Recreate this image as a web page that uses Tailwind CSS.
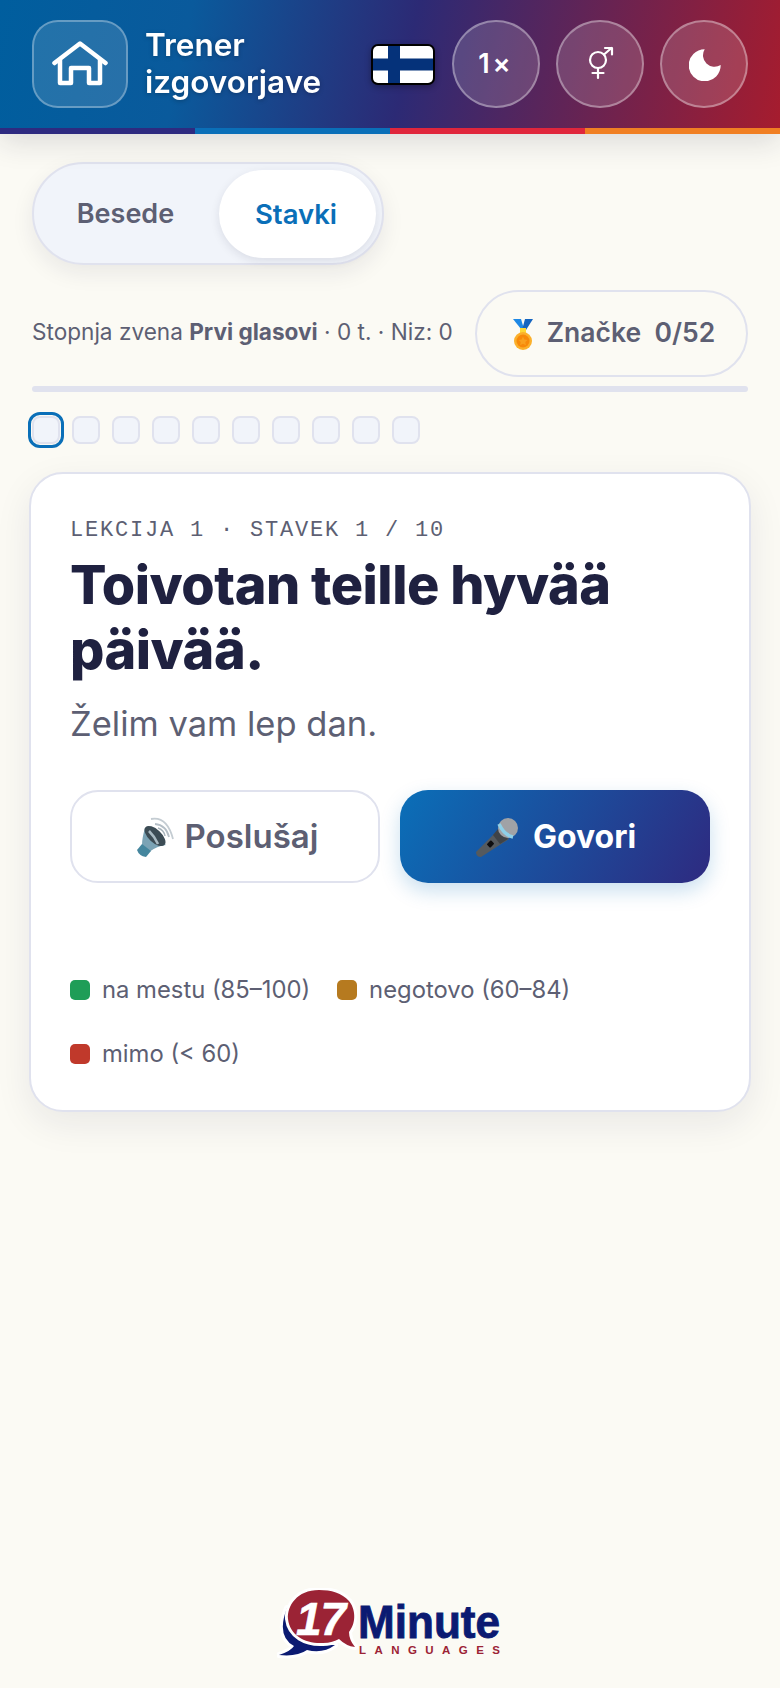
<!DOCTYPE html>
<html lang="sl"><head><meta charset="utf-8"><script src="https://cdn.jsdelivr.net/npm/@tailwindcss/browser@4"></script></head>
<body class="m-0 bg-[#fbfaf4]">
<div class="w-[780px] h-[1688px] flex flex-col bg-[#fbfaf4] font-['Inter',sans-serif] overflow-hidden">
  <header class="relative shrink-0 shadow-[0_8px_28px_rgba(30,30,60,0.14)]">
    <div class="h-[128px] flex items-center pl-[32px] pr-[32px] bg-[linear-gradient(102deg,#005e9e_0%,#0a5a9c_24%,#2c2a75_52%,#a61c2e_100%)]">
      <div class="w-[96px] h-[88px] rounded-[26px] bg-white/13 border-2 border-white/30 flex items-center justify-center shrink-0">
        <svg width="56" height="46" viewBox="0 0 56 46" fill="none" stroke="white" stroke-width="4.500" stroke-linejoin="round" stroke-linecap="round"><path d="M2.500 22 L28 2.500 L53.500 22"/><path d="M8 19 V42 H19 V27 H37 V42 H48 V19"/></svg>
      </div>
      <div class="ml-[17px] text-white text-[31.5px] leading-[37px] font-semibold w-[190px] -mt-[3px] drop-shadow-[0_1px_2px_rgba(0,0,0,0.25)]">Trener<br>izgovorjave</div>
      <div class="ml-auto w-[64px] h-[41px] rounded-[7px] bg-black p-[2px] shadow-[0_2px_6px_rgba(0,0,0,0.3)]">
        <svg width="60" height="37" viewBox="0 0 60 37" class="rounded-[5px] block"><rect width="60" height="37" fill="#fff"/><rect x="0" y="12.500" width="60" height="12" fill="#05327a"/><rect x="15" y="0" width="12" height="37" fill="#05327a"/></svg>
      </div>
      <div class="ml-[17px] w-[88px] h-[88px] rounded-full bg-white/15 border-2 border-white/35 flex items-center justify-center text-white text-[27px] tracking-[3px] font-semibold">1×</div>
      <div class="ml-[16px] w-[88px] h-[88px] rounded-full bg-white/15 border-2 border-white/35 flex items-center justify-center">
        <svg width="28" height="34" viewBox="0 0 28 34" fill="none" stroke="white" stroke-width="2.200" stroke-linecap="round" stroke-linejoin="round" class="ml-[3px] -mt-[2px]"><circle cx="10" cy="14" r="8"/><path d="M16 8.500 L23.500 2 M17 2 H24 V8.500"/><path d="M10 22 V32 M4.500 27 H15.500"/></svg>
      </div>
      <div class="ml-[16px] w-[88px] h-[88px] rounded-full bg-white/15 border-2 border-white/35 flex items-center justify-center">
        <svg width="32" height="32" viewBox="0 0 32 32" class="mt-[1px] ml-[2px]"><path d="M15.700 0.300 A16 16 0 1 0 31.700 16 A11.500 11.500 0 0 1 15.700 0.300Z" fill="white"/></svg>
      </div>
    </div>
    <div class="h-[6px] flex">
      <div class="flex-1 bg-[#2e2a80]"></div><div class="flex-1 bg-[#0a6fb8]"></div><div class="flex-1 bg-[#e0263c]"></div><div class="flex-1 bg-[#f07f23]"></div>
    </div>
  </header>

  <main class="px-[32px] pt-[28px] flex-1 flex flex-col">
    <div class="w-[352px] h-[103px] rounded-full border-2 border-[#e0e2ee] bg-[#f1f4fa] shadow-[0_8px_22px_rgba(30,30,60,0.08)] flex items-center pl-[6px] pr-[6px]">
      <div class="w-[172px] mr-[8px] pt-[2px] text-center text-[27px] font-semibold text-[#5d5f73]">Besede</div>
      <div class="w-[158px] h-[88px] pt-[2px] pr-[3px] rounded-full bg-white shadow-[0_3px_10px_rgba(30,30,60,0.10)] flex items-center justify-center text-[27.500px] font-semibold text-[#0a6fb8]">Stavki</div>
    </div>

    <div class="mt-[25px] flex items-center justify-between h-[87px]">
      <div class="text-[22.600px] -mt-[3px] text-[#5d5f73] whitespace-nowrap">Stopnja zvena <b class="font-bold">Prvi glasovi</b> · 0 t. · Niz: 0</div>
      <div class="w-[273px] h-[87px] rounded-full border-2 border-[#e0e2ee] flex items-center justify-center gap-[12px] pl-[3px] text-[26.500px] font-semibold text-[#5d5f73] whitespace-pre">
        <svg width="24" height="32" viewBox="8 6 24 32" class="shrink-0"><path d="M10 7 H18 L21 17 H18Z" fill="#1e88e5"/><path d="M30 7 H22 L19 18 H23Z" fill="#1565c0"/><rect x="17" y="16" width="6" height="6" fill="#fdd835"/><circle cx="20" cy="29" r="9" fill="#fbb02b"/><circle cx="20" cy="29" r="6.500" fill="#f57c00" opacity="0.75"/><path d="M20 24.500 l1.400 3 3.200 .4 -2.300 2.200 .6 3.200 -2.900 -1.600 -2.900 1.600 .6 -3.200 -2.300 -2.200 3.200 -.4z" fill="#f9a825" opacity="0.7"/></svg>
        <span class="-mt-[2px]">Značke  0/52</span>
      </div>
    </div>

    <div class="mt-[9px] h-[6px] rounded-full bg-[#e0e2ee]"></div>

    <div class="mt-[24px] flex gap-[12px]">
      <div class="w-[28px] h-[28px] rounded-[8px] bg-[#f1f4fa] border-2 border-[#e0e2ee] outline-[3px] outline-[#0a6fb8] outline-offset-[1px]"></div>
      <div class="w-[28px] h-[28px] rounded-[8px] bg-[#f1f4fa] border-2 border-[#e0e2ee]"></div>
      <div class="w-[28px] h-[28px] rounded-[8px] bg-[#f1f4fa] border-2 border-[#e0e2ee]"></div>
      <div class="w-[28px] h-[28px] rounded-[8px] bg-[#f1f4fa] border-2 border-[#e0e2ee]"></div>
      <div class="w-[28px] h-[28px] rounded-[8px] bg-[#f1f4fa] border-2 border-[#e0e2ee]"></div>
      <div class="w-[28px] h-[28px] rounded-[8px] bg-[#f1f4fa] border-2 border-[#e0e2ee]"></div>
      <div class="w-[28px] h-[28px] rounded-[8px] bg-[#f1f4fa] border-2 border-[#e0e2ee]"></div>
      <div class="w-[28px] h-[28px] rounded-[8px] bg-[#f1f4fa] border-2 border-[#e0e2ee]"></div>
      <div class="w-[28px] h-[28px] rounded-[8px] bg-[#f1f4fa] border-2 border-[#e0e2ee]"></div>
      <div class="w-[28px] h-[28px] rounded-[8px] bg-[#f1f4fa] border-2 border-[#e0e2ee]"></div>
    </div>

    <section class="mt-[28px] -mx-[3px] w-[722px] h-[640px] rounded-[34px] bg-white border-2 border-[#e0e2ee] shadow-[0_12px_36px_rgba(30,30,60,0.08)] pt-[43px] px-[39px]">
      <div class="font-['Liberation_Mono',monospace] text-[22px] leading-[28px] tracking-[1.800px] text-[#5d5f73] uppercase">Lekcija 1 · Stavek 1 / 10</div>
      <h1 class="mt-[7px] text-[54px] leading-[65px] font-extrabold text-[#1f2140] tracking-[-0.5px]">Toivotan teille hyvää päivää.</h1>
      <p class="mt-[20px] text-[34.500px] leading-[44px] text-[#5d5f73]">Želim vam lep dan.</p>
      <div class="mt-[44px] grid grid-cols-2 gap-[20px]">
        <div class="h-[93px] rounded-[28px] bg-white border-2 border-[#e0e2ee] flex items-center justify-center gap-[8px] pl-[3px] text-[33px] font-semibold text-[#5d5f73]">
          <svg width="42" height="42" viewBox="8 10 42 42" class="shrink-0" fill="none"><path d="M24 13 Q40 10 46 33" stroke="#c4ccd2" stroke-width="1.800"/><path d="M28 18 Q39 19 42 31" stroke="#b4bec6" stroke-width="1.800"/><path d="M31 22 Q37 24 38 30" stroke="#a8b4bc" stroke-width="1.500"/><path d="M18 22 Q15 32 15 39 L22 46 Q30 40 39 39 Z" fill="#7ba3b5"/><ellipse cx="28" cy="30" rx="13" ry="6.500" transform="rotate(43 28 30)" fill="#3c4c55"/><path d="M22 25 Q28 31 31 38" stroke="#a9bac3" stroke-width="2.500"/><path d="M15 38 L10 44 Q12 50 19 51 L24 45Z" fill="#45869e"/></svg>
          <span>Poslušaj</span>
        </div>
        <div class="h-[93px] rounded-[28px] bg-[linear-gradient(120deg,#0a6fb8,#2e2a80)] shadow-[0_8px_20px_rgba(10,111,184,0.22)] flex items-center justify-center gap-[15px] text-[32px] font-bold text-white">
          <svg width="44" height="44" viewBox="6 6 44 44" class="shrink-0" fill="none"><path d="M31 20 L41 30 L13 48 Q8 48 8 43Z" fill="#555a5e"/><path d="M30 20 L40 30 L32 35 L25 26Z" fill="#3f4347"/><rect x="20" y="32" width="5" height="6" rx="1" transform="rotate(45 22.500 35)" fill="#0e0e10"/><circle cx="40" cy="19" r="10" fill="#a0a2a6"/><path d="M31 15 Q36 26 45 28" stroke="#8ed0e8" stroke-width="3.500"/></svg>
          <span>Govori</span>
        </div>
      </div>
      <div class="mt-[91px] flex flex-wrap gap-x-[27px] gap-y-[32px] text-[23.800px] leading-[32px] text-[#5d5f73]">
        <div class="flex items-center gap-[12px]"><span class="w-[20px] h-[20px] rounded-[5px] bg-[#1f9d57]"></span>na mestu (85–100)</div>
        <div class="flex items-center gap-[12px]"><span class="w-[20px] h-[20px] rounded-[5px] bg-[#b67a1f]"></span>negotovo (60–84)</div>
        <div class="flex items-center gap-[12px] w-full"><span class="w-[20px] h-[20px] rounded-[5px] bg-[#c0392b]"></span>mimo (&lt; 60)</div>
      </div>
    </section>

    <footer class="mt-auto mb-[28px] self-center">
      <svg width="226" height="72" viewBox="-2 0 226 72" class="block">
        <g style="paint-order:stroke" stroke="#fff" stroke-width="6" stroke-linejoin="round">
          <path d="M8 20 Q-3 48 15 58 Q12 63 0 67 Q18 69 28 62 Q44 66 56 57 Q30 58 15 44 Q8 33 8 20Z" fill="#0b1a72"/>
          <path d="M40 2 C18 2 8 18 9 31 C11 48 27 56 44 55 C51 55 56 53 60 51 Q67 58 76 59 Q70 52 70 44 C78 34 76 20 70 13 C63 5 52 2 40 2Z" fill="#9b2335"/>
        </g>
        <text x="17" y="47" font-family="Liberation Sans, sans-serif" font-style="italic" font-weight="700" font-size="46" fill="#fff" stroke="#fff" stroke-width="0.600" letter-spacing="-1">17</text>
        <text x="79" y="50" font-family="Liberation Sans, sans-serif" font-weight="700" font-size="46" fill="#0b1a72" stroke="#0b1a72" stroke-width="0.900" textLength="142" lengthAdjust="spacingAndGlyphs">Minute</text>
        <text x="80" y="66" font-family="Liberation Sans, sans-serif" font-weight="700" font-size="11.500" fill="#9b2335" textLength="141">LANGUAGES</text>
      </svg>
    </footer>
  </main>
</div>
</body></html>
